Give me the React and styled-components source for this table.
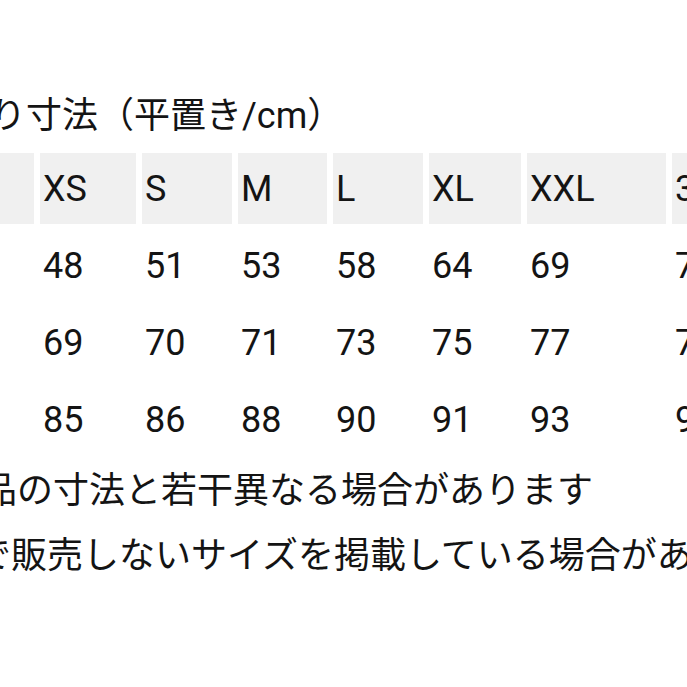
import React from 'react';
import styled, { createGlobalStyle } from 'styled-components';

const GlobalStyle = createGlobalStyle`
  html, body {
    margin: 0;
    padding: 0;
    background: #ffffff;
    overflow: hidden;
  }
  body {
    font-family: Roboto, "Noto Sans CJK JP", sans-serif;
    color: #141414;
  }
`;

const sizes = ['XS', 'S', 'M', 'L', 'XL', 'XXL', '3XL'];

const rows = [
  { label: '身幅', values: [48, 51, 53, 58, 64, 69, 72] },
  { label: '着丈', values: [69, 70, 71, 73, 75, 77, 79] },
  { label: '裄丈', values: [85, 86, 88, 90, 91, 93, 95] },
];

const Page = styled.div`
  width: 900px;
  margin-left: -150px;
  padding-top: 91px;
`;

const Title = styled.h2`
  margin: 0 0 12px ${(p) => p.$shift}px;
  font-size: 36px;
  font-weight: 400;
  line-height: 50px;
  white-space: nowrap;
`;

const Table = styled.div`
  display: grid;
  grid-template-columns: 184px 96px 90px 89px 90px 92px 139px 120px;
  grid-auto-rows: 71px;
  gap: 6px;
`;

const Cell = styled.div`
  display: flex;
  align-items: center;
  padding: 0 3px;
  font-size: 36px;
  background: ${(p) => (p.$head ? '#f0f0f0' : 'transparent')};
  white-space: nowrap;
`;

const Notes = styled.div`
  margin-top: 4px;
`;

const Note = styled.p`
  margin: 0 0 0 ${(p) => p.$shift}px;
  font-size: 36px;
  line-height: 65px;
  white-space: nowrap;
`;

export default function App() {
  return (
    <>
      <GlobalStyle />
      <Page>
        <Title $shift={32}>仕上がり寸法（平置き/cm）</Title>
        <Table>
          <Cell $head />
          {sizes.map((s) => (
            <Cell $head key={s}>{s}</Cell>
          ))}
          {rows.map((r) => (
            <React.Fragment key={r.label}>
              <Cell>{r.label}</Cell>
              {r.values.map((v, i) => (
                <Cell key={i}>{v}</Cell>
              ))}
            </React.Fragment>
          ))}
        </Table>
        <Notes>
          <Note $shift={59}>※商品の寸法と若干異なる場合があります</Note>
          <Note $shift={17}>※日本で販売しないサイズを掲載している場合があります</Note>
        </Notes>
      </Page>
    </>
  );
}
